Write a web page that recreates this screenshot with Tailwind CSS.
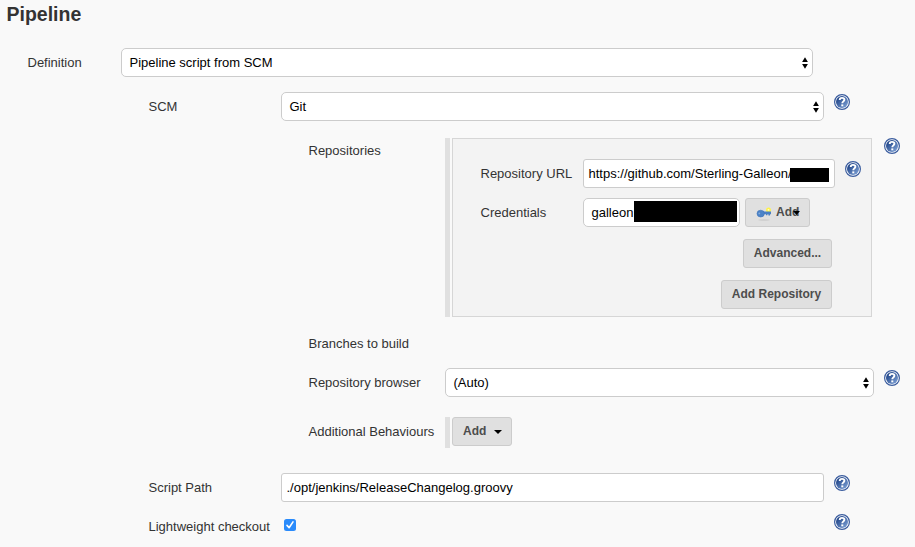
<!DOCTYPE html>
<html lang="en">
<head>
<meta charset="utf-8">
<title>Pipeline</title>
<script src="https://cdn.jsdelivr.net/npm/@tailwindcss/browser@4"></script>
</head>
<body class="h-[547px] w-[915px] overflow-hidden bg-[#f9f9f9] font-['Liberation_Sans',Arial,sans-serif] text-[13px] leading-[15px] text-[#333]">
<svg class="absolute size-0">
  <defs>
    <linearGradient id="blue" x1="0" y1="0" x2="1" y2="1"><stop offset="0.15" stop-color="#1f4488"/><stop offset="1" stop-color="#86a9dc"/></linearGradient>
    <symbol id="help" viewBox="0 0 16 16">
      <circle cx="8" cy="8" r="7.4" fill="#fff" stroke="#3a5c9e" stroke-width="1.2"/>
      <circle cx="8" cy="8" r="6" fill="url(#blue)"/>
      <path d="M5.7 6.1C5.7 4.6 6.7 3.9 8 3.9s2.4.7 2.4 1.9c0 1.6-2.1 1.6-2.1 3.5" fill="none" stroke="#fff" stroke-width="1.9"/>
      <rect x="7.3" y="10.4" width="2" height="1.9" fill="#fff"/>
    </symbol>
    <symbol id="updown" viewBox="0 0 6 12"><path d="M3 0.3L5.9 5H.1zM3 11.7L5.9 7H.1z" fill="#000"/></symbol>
  </defs>
</svg>
<main class="flex flex-col">
  <h1 class="h-[48px] pt-[3px] pl-[6.5px] text-[19.5px] leading-[22px] font-bold">Pipeline</h1>

  <div class="flex h-[29px] items-center">
    <label class="w-[121px] pl-[27.5px]">Definition</label>
    <div class="flex h-[29px] w-[692px] items-center justify-between rounded-[5px] border border-[#ccc] bg-white pr-[4px] pl-[7.5px] text-black"><span>Pipeline script from SCM</span><svg class="h-[12px] w-[6px]"><use href="#updown"/></svg></div>
  </div>

  <div class="mt-[15px] flex h-[29px]">
    <label class="w-[281px] pt-[7px] pl-[148.5px]">SCM</label>
    <div class="flex h-[29px] w-[543px] items-center justify-between rounded-[5px] border border-[#ccc] bg-white pr-[4px] pl-[7.5px] text-black"><span>Git</span><svg class="h-[12px] w-[6px]"><use href="#updown"/></svg></div>
    <svg class="mt-[2px] ml-[10px] size-4"><use href="#help"/></svg>
  </div>

  <div class="mt-[17px] flex h-[179px]">
    <label class="w-[445px] pt-[5px] pl-[308.5px]">Repositories</label>
    <div class="w-[5px] bg-[#e0e0e0]"></div>
    <section class="ml-[2px] flex w-[420px] flex-col border border-[#d6d6d6] bg-[#f3f3f3] pt-[20px]">
      <div class="flex h-[29px]">
        <label class="w-[130px] pt-[7px] pl-[27.5px]">Repository URL</label>
        <div class="flex h-[29px] w-[252px] items-center rounded-[3px] border border-[#ccc] bg-white pl-[4.5px] text-black"><span class="w-[201.5px] whitespace-nowrap">https://github.com/Sterling-Galleon/</span><span class="z-10 mt-[2px] h-[14px] w-[39px] bg-black"></span></div>
        <svg class="mt-[2px] ml-[10px] size-4"><use href="#help"/></svg>
      </div>
      <div class="mt-[10px] flex h-[29px]">
        <label class="w-[130px] pt-[7px] pl-[27.5px]">Credentials</label>
        <div class="flex h-[29px] w-[157px] items-center rounded-[5px] border border-[#ccc] bg-white pl-[7.5px] text-black"><span class="w-[42.5px]">galleon</span><span class="mb-[2px] h-[21px] w-[103px] bg-black"></span></div>
        <button class="ml-[5px] flex h-[29px] w-[65px] items-center rounded-[3px] border border-[#ccc] bg-[#e0e0e0] pl-[10px] text-[12px] font-bold text-[#4d4d4d]">
          <svg class="mr-[4px] size-4" viewBox="0 0 16 16">
            <ellipse cx="8" cy="15" rx="6" ry=".7" fill="#ccc"/>
            <circle cx="12.5" cy="5" r="2.5" fill="#fff34a"/>
            <path d="M7 6.6h8v2.6h-1v1.2h-1.6V9.2h-1v1h-1.4v-1H7z" fill="#4a80c4"/>
            <ellipse cx="4.7" cy="8.6" rx="3.7" ry="3.4" fill="#4b83c8" stroke="#3f74b8" stroke-width=".6"/>
            <circle cx="3.3" cy="8.4" r=".9" fill="#86abd9"/>
            <circle cx="12.5" cy="4.8" r=".9" fill="#fffbd0"/>
          </svg>
          <span>Add</span><svg class="ml-[-6px] h-[4px] w-[7px]" viewBox="0 0 7 4"><path d="M0 0h7L3.5 4z"/></svg>
        </button>
      </div>
      <div class="mt-[12px] flex w-[379px] justify-end"><button class="h-[29px] w-[89px] rounded-[3px] border border-[#ccc] bg-[#e0e0e0] text-[12px] font-bold text-[#4d4d4d]">Advanced...</button></div>
      <div class="mt-[12px] flex w-[379px] justify-end"><button class="h-[29px] w-[111px] rounded-[3px] border border-[#ccc] bg-[#e0e0e0] text-[12px] font-bold whitespace-nowrap text-[#4d4d4d]">Add Repository</button></div>
    </section>
    <svg class="ml-[12px] size-4"><use href="#help"/></svg>
  </div>

  <div class="mt-[19px] pl-[308.5px]"><label>Branches to build</label></div>

  <div class="mt-[17px] flex h-[29px]">
    <label class="w-[445px] pt-[7px] pl-[308.5px]">Repository browser</label>
    <div class="flex h-[29px] w-[429px] items-center justify-between rounded-[5px] border border-[#ccc] bg-white pr-[4px] pl-[7.5px] text-black"><span>(Auto)</span><svg class="h-[12px] w-[6px]"><use href="#updown"/></svg></div>
    <svg class="mt-[2px] ml-[10px] size-4"><use href="#help"/></svg>
  </div>

  <div class="mt-[20px] flex h-[31px]">
    <label class="w-[445px] pt-[7px] pl-[308.5px]">Additional Behaviours</label>
    <div class="w-[5px] bg-[#e0e0e0]"></div>
    <button class="ml-[2px] flex h-[29px] w-[60px] items-center rounded-[3px] border border-[#ccc] bg-[#e0e0e0] pl-[10px] text-[12px] font-bold text-[#4d4d4d]"><span>Add</span><svg class="mt-[1px] ml-[8px] h-[4px] w-[8px]" viewBox="0 0 8 4"><path d="M0 0h8L4 4z"/></svg></button>
  </div>

  <div class="mt-[25px] flex h-[29px]">
    <label class="w-[281px] pt-[7px] pl-[148.5px]">Script Path</label>
    <div class="flex h-[29px] w-[543px] items-center rounded-[3px] border border-[#ccc] bg-white pl-[4.5px] text-black">./opt/jenkins/ReleaseChangelog.groovy</div>
    <svg class="mt-[2px] ml-[10px] size-4"><use href="#help"/></svg>
  </div>

  <div class="mt-[12px] flex">
    <label class="w-[284px] pt-[5px] pl-[148.5px]">Lightweight checkout</label>
    <svg class="mt-[5px] size-[12px]" viewBox="0 0 12 12"><rect width="12" height="12" rx="2.5" fill="#2a8bfb"/><path d="M3 6.4l2.1 2.3L9 2.9" fill="none" stroke="#fff" stroke-width="1.6" stroke-linecap="round" stroke-linejoin="round"/></svg>
    <svg class="ml-[538px] size-4"><use href="#help"/></svg>
  </div>
</main>
</body>
</html>
